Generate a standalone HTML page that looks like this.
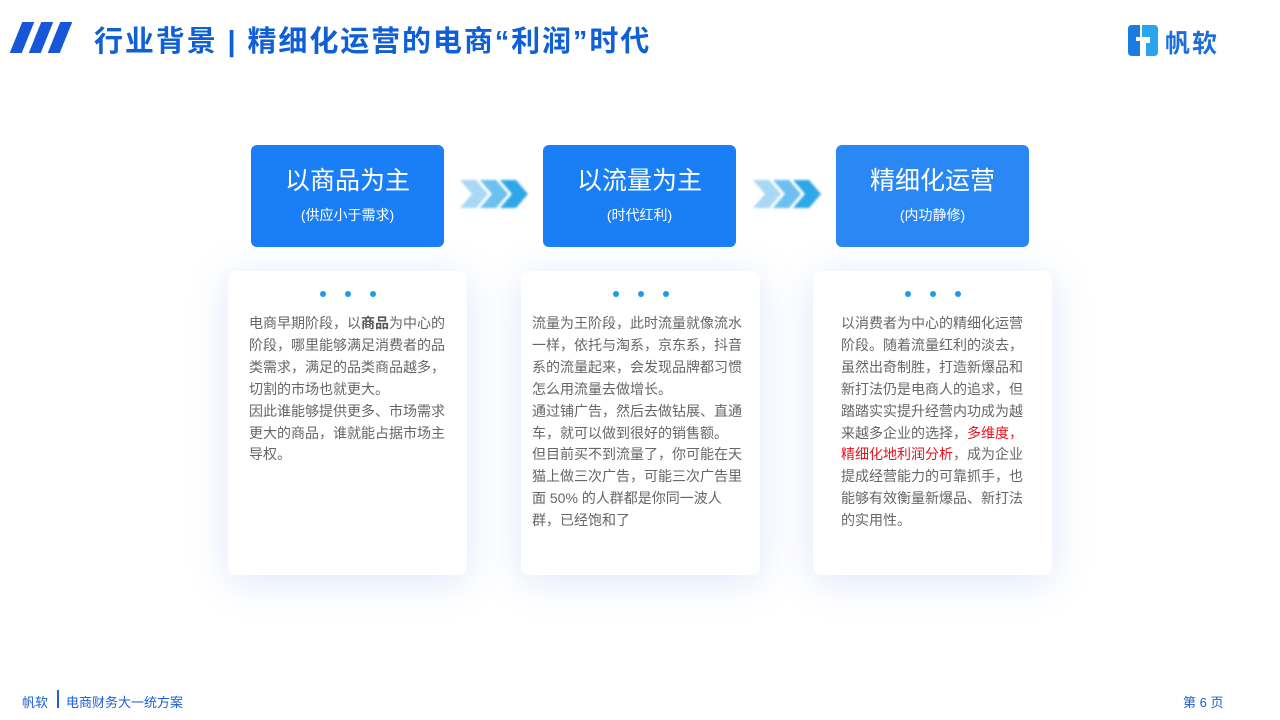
<!DOCTYPE html>
<html><head><meta charset="utf-8"><style>
*{margin:0;padding:0;box-sizing:border-box}
body{width:1280px;height:720px;background:#fff;position:relative;overflow:hidden;font-family:"Liberation Sans","Noto Sans CJK SC",sans-serif}
.t{position:absolute;left:94px;top:18px;font-size:29px;font-weight:bold;color:#0f5fd6;letter-spacing:1.9px;white-space:nowrap}
.hb{position:absolute;top:22px;width:12px;height:31px;background:#1756d6;transform:skewX(-22deg)}
.box{position:absolute;top:145px;width:193px;height:102px;background:#1a7ff6;border-radius:6px;color:#fff;text-align:center}
.box .a{font-size:25px;margin-top:20px;line-height:32px}
.box .b{font-size:14px;margin-top:8px}
.card{position:absolute;top:271px;width:239px;height:304px;background:#fff;border-radius:8px;box-shadow:0 6px 40px rgba(80,120,230,0.18)}
.dots{position:absolute;top:13px;left:0;width:100%;text-align:center}
.dots span{display:inline-block;width:6px;height:6px;border-radius:50%;background:#1d9be8;margin:0 9.5px}
.txt{position:absolute;top:42px;font-size:14px;line-height:21.9px;color:#666}
.txt b{color:#555}
.red{color:#e8141e}
.arr{position:absolute;top:176px}
.f{position:absolute;top:692px;font-size:13px;color:#1b5ed6}
</style></head><body>
<div class="hb" style="left:16px"></div><div class="hb" style="left:35px"></div><div class="hb" style="left:54px"></div>
<div class="t">行业背景 | 精细化运营的电商“利润”时代</div>
<svg style="position:absolute;left:1128px;top:25px" width="30" height="32" viewBox="0 0 30 32"><path d="M0 4 Q0 0 4 0 H12 V12 H8 V16 H12 V31 H4 Q0 31 0 27Z" fill="#1a7be0"/><path d="M14 0 H26 Q30 0 30 4 V27 Q30 31 26 31 H18 V18 H22 V12 H14Z" fill="#2aa4ec"/></svg>
<div style="position:absolute;left:1165px;top:24px;font-size:25px;font-weight:bold;color:#1a6fd8;letter-spacing:2px">帆软</div>

<div class="box" style="left:251px"><div class="a">以商品为主</div><div class="b">(供应小于需求)</div></div>
<div class="box" style="left:543px"><div class="a">以流量为主</div><div class="b">(时代红利)</div></div>
<div class="box" style="left:836px;background:#2a88f4"><div class="a">精细化运营</div><div class="b">(内功静修)</div></div>

<svg class="arr" style="left:456px" width="76" height="36" viewBox="0 0 76 36"><defs><filter id="bl"><feGaussianBlur stdDeviation="1"/></filter></defs><g filter="url(#bl)"><path d="M4 4 H20 L32 18 L20 32 H4 L16 18Z" fill="#a9d8f5"/><path d="M24 4 H40 L52 18 L40 32 H24 L36 18Z" fill="#6cc0f0"/><path d="M44 4 H60 L72 18 L60 32 H44 L56 18Z" fill="#2ea7e8"/></g></svg>
<svg class="arr" style="left:749px" width="76" height="36" viewBox="0 0 76 36"><g filter="url(#bl)"><path d="M4 4 H20 L32 18 L20 32 H4 L16 18Z" fill="#a9d8f5"/><path d="M24 4 H40 L52 18 L40 32 H24 L36 18Z" fill="#6cc0f0"/><path d="M44 4 H60 L72 18 L60 32 H44 L56 18Z" fill="#2ea7e8"/></g></svg>

<div class="card" style="left:228px"><div class="dots"><span></span><span></span><span></span></div>
<div class="txt" style="left:21px;width:205px">电商早期阶段，以<b>商品</b>为中心的阶段，哪里能够满足消费者的品类需求，满足的品类商品越多，切割的市场也就更大。<br>因此谁能够提供更多、市场需求更大的商品，谁就能占据市场主导权。</div></div>
<div class="card" style="left:521px"><div class="dots"><span></span><span></span><span></span></div>
<div class="txt" style="left:11px;width:215px">流量为王阶段，此时流量就像流水一样，依托与淘系，京东系，抖音系的流量起来，会发现品牌都习惯怎么用流量去做增长。<br>通过铺广告，然后去做钻展、直通车，就可以做到很好的销售额。<br>但目前买不到流量了，你可能在天猫上做三次广告，可能三次广告里面 50% 的人群都是你同一波人群，已经饱和了</div></div>
<div class="card" style="left:813px"><div class="dots"><span></span><span></span><span></span></div>
<div class="txt" style="left:28px;width:186px">以消费者为中心的精细化运营阶段。随着流量红利的淡去，虽然出奇制胜，打造新爆品和新打法仍是电商人的追求，但踏踏实实提升经营内功成为越来越多企业的选择，<span class="red">多维度，精细化地利润分析</span>，成为企业提成经营能力的可靠抓手，也能够有效衡量新爆品、新打法的实用性。</div></div>

<div class="f" style="left:22px">帆软</div>
<div style="position:absolute;left:57px;top:690px;width:2px;height:18px;background:#1b5ed6"></div>
<div class="f" style="left:66px">电商财务大一统方案</div>
<div class="f" style="left:1183px">第 6 页</div>
</body></html>
